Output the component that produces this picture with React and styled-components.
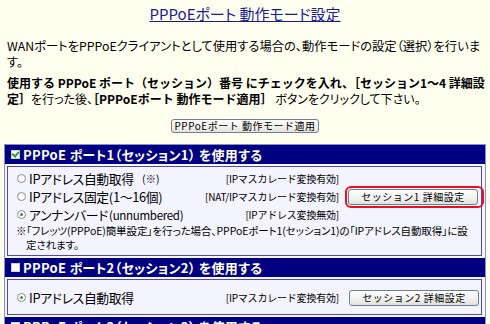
import React from 'react'
import styled, { createGlobalStyle, css } from 'styled-components'

const GlobalStyle = createGlobalStyle`
  html, body {
    margin: 0;
    padding: 0;
    background: #fffff0;
  }
  body {
    font-family: "Noto Sans CJK JP", sans-serif;
    font-feature-settings: "palt";
    color: #000;
  }
`

const Page = styled.div`
  width: 490px;
  height: 324px;
  overflow: hidden;
  box-sizing: border-box;
  padding: 5px 4px 0;
`

const Title = styled.h1`
  margin: 0;
  text-align: center;
  font-size: 15px;
  font-weight: normal;
  line-height: 18px;
  a {
    color: #1a1a9c;
    text-decoration: underline;
  }
`

const Text = styled.p`
  margin: ${({ $top }) => $top}px 0 0;
  padding-left: 3px;
  font-size: ${({ $size }) => $size || 12}px;
  line-height: 16px;
  height: 32px;
  strong {
    font-weight: bold;
    font-feature-settings: normal;
  }
`

const ApplyRow = styled.div`
  display: flex;
  justify-content: center;
  margin-top: 12px;
`

const Button = styled.button`
  box-sizing: border-box;
  width: ${({ $width }) => $width}px;
  height: ${({ $height }) => $height || 16}px;
  padding: 0;
  font-family: "Noto Sans CJK JP", sans-serif;
  font-size: 10px;
  letter-spacing: 0.5px;
  line-height: 1;
  color: #000;
  background: linear-gradient(#ffffff, #f3f3f1 50%, #e2e2dc);
  border: 1px solid #6f7f91;
  border-radius: 3px;
  cursor: pointer;
`

const Sessions = styled.div`
  margin-top: 11px;
  border: 1px solid #8a8ad8;
  background: #f6f6ff;
  display: flex;
  flex-direction: column;
  gap: 2px;
`

const Header = styled.div`
  display: flex;
  align-items: center;
  gap: 3px;
  height: 19px;
  padding-left: 6px;
  background: #000080;
  color: #fff;
  font-size: 13px;
  font-weight: bold;
  letter-spacing: 0.3px;
`

const Check = styled.span`
  box-sizing: border-box;
  width: 9px;
  height: 9px;
  background: #fff;
  border: 1px solid #cfcfcf;
  display: inline-flex;
  align-items: center;
  justify-content: center;
  ${({ $checked }) =>
    $checked &&
    css`
      &:after {
        content: '';
        width: 3px;
        height: 5px;
        border: solid #2ba02b;
        border-width: 0 2px 2px 0;
        transform: translate(0, -1px) rotate(40deg);
      }
    `}
`

const Body = styled.div`
  margin: 0 3px 0 2px;
  border: 1px solid #4b4bb0;
  background: #f4f4ff;
  padding: ${({ $pad }) => $pad};
`

const Row = styled.div`
  display: grid;
  grid-template-columns: 1fr auto 130px;
  column-gap: 10px;
  align-items: center;
  height: 18px;
  padding: 0 2px 0 9px;
`

const Choice = styled.label`
  display: flex;
  align-items: center;
  gap: 1px;
  font-size: 12.8px;
  letter-spacing: -0.3px;
  white-space: nowrap;
  small {
    font-size: 10.5px;
    letter-spacing: 0;
    margin-left: 7px;
  }
`

const Latin = styled.span`
  font-size: 11.5px;
  letter-spacing: -0.3px;
`

const Radio = styled.span`
  box-sizing: border-box;
  width: 9px;
  height: 9px;
  border-radius: 50%;
  border: 1px solid #8a8a8a;
  background: #fff;
  display: inline-flex;
  align-items: center;
  justify-content: center;
  margin-right: 2px;
  ${({ $on }) =>
    $on &&
    css`
      &:after {
        content: '';
        width: 3px;
        height: 3px;
        border-radius: 50%;
        background: #2ba02b;
      }
    `}
`

const Mode = styled.span`
  font-size: 10px;
  font-feature-settings: normal;
  letter-spacing: -0.2px;
  white-space: nowrap;
  text-align: right;
`

const Highlight = styled.span`
  display: flex;
  margin: -4px -5px -4px -4px;
  padding: 1px 2px 1px 1px;
  border: 2px solid #e8101a;
  border-radius: 6px;
`

const Note = styled.p`
  margin: 1px 0 0;
  padding: 0 6px 0 18px;
  text-indent: -10px;
  font-size: 10.5px;
  letter-spacing: -0.1px;
  line-height: 14px;
`

const modes = [
  { label: 'IPアドレス自動取得', extra: '(※)', mode: '[IPマスカレード変換有効]' },
  { label: 'IPアドレス固定(1～16個)', mode: '[NAT/IPマスカレード変換有効]', button: true },
  { label: 'アンナンバード', latin: '(unnumbered)', mode: '[IPアドレス変換無効]', on: true },
]

export default function App() {
  return (
    <Page>
      <GlobalStyle />
      <Title>
        <a href="#top">PPPoEポート 動作モード設定</a>
      </Title>
      <Text $top={15} $size={12.3}>
        WANポートをPPPoEクライアントとして使用する場合の、動作モードの設定（選択）を行います。
      </Text>
      <Text $top={5}>
        <strong>使用する PPPoE ポート（セッション）番号 にチェックを入れ、［セッション1～4 詳細設定］</strong>を行った後、
        <strong>［PPPoEポート 動作モード適用］</strong> ボタンをクリックして下さい。
      </Text>
      <ApplyRow>
        <Button type="button" $width={148} $height={14}>
          PPPoEポート 動作モード適用
        </Button>
      </ApplyRow>

      <Sessions>
        <Header>
          <Check $checked />
          PPPoE ポート1（セッション1） を使用する
        </Header>
        <Body $pad="2px 0 3px">
          {modes.map(m => (
            <Row key={m.label}>
              <Choice>
                <Radio $on={m.on} />
                {m.label}
                {m.latin && <Latin>{m.latin}</Latin>}
                {m.extra && <small>{m.extra}</small>}
              </Choice>
              <Mode>{m.mode}</Mode>
              {m.button ? (
                <Highlight>
                  <Button type="button" $width={130}>
                    セッション1 詳細設定
                  </Button>
                </Highlight>
              ) : (
                <span />
              )}
            </Row>
          ))}
          <Note>
            ※「フレッツ(PPPoE)簡単設定」を行った場合、PPPoEポート1(セッション1)の「IPアドレス自動取得」に設定されます。
          </Note>
        </Body>

        <Header>
          <Check />
          PPPoE ポート2（セッション2） を使用する
        </Header>
        <Body $pad="8px 0 8px">
          <Row>
            <Choice>
              <Radio $on />
              IPアドレス自動取得
            </Choice>
            <Mode>[IPマスカレード変換有効]</Mode>
            <Button type="button" $width={130}>
              セッション2 詳細設定
            </Button>
          </Row>
        </Body>

        <Header>
          <Check />
          PPPoE ポート3（セッション3） を使用する
        </Header>
      </Sessions>
    </Page>
  )
}
